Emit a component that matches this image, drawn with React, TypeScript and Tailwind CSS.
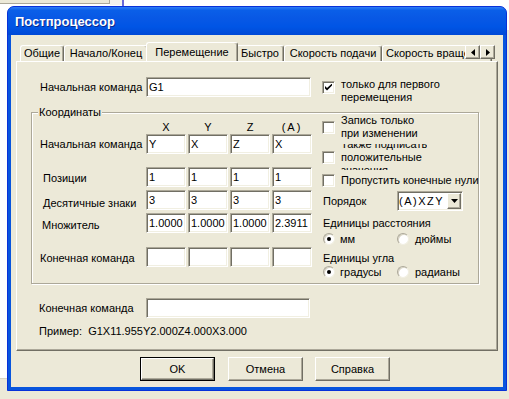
import React from "react";

const sunken =
  "bg-white border border-t-[#aca899] border-l-[#aca899] border-r-white border-b-white shadow-[inset_1px_1px_0_#716f64,inset_-1px_-1px_0_#f1efe2]";
const raised =
  "bg-[#ece9d8] border border-t-white border-l-white border-r-[#716f64] border-b-[#716f64] shadow-[inset_-1px_-1px_0_#aca899]";

function Field({ w, value }: { w: string; value?: string }) {
  return (
    <div className={`h-[20px] ${w} ${sunken} pl-[2px] flex items-center whitespace-nowrap overflow-hidden`}>
      {value}
    </div>
  );
}

function Check({ checked }: { checked?: boolean }) {
  return (
    <div className={`w-[13px] h-[13px] shrink-0 ${sunken} flex items-center justify-center`}>
      {checked && (
        <svg width="7" height="7" viewBox="0 0 7 7">
          <path d="M0 2 L0 4.5 L2 6.5 L7 1.5 L7 -0.5 L2 4 Z" fill="#000" />
        </svg>
      )}
    </div>
  );
}

function Radio({ checked }: { checked?: boolean }) {
  return (
    <div className="w-[12px] h-[12px] shrink-0 rounded-full bg-white border border-t-[#aca899] border-l-[#aca899] border-r-[#f1efe2] border-b-[#f1efe2] shadow-[inset_1px_1px_0_#d8d4c4] flex items-center justify-center">
      {checked && <div className="w-[4px] h-[4px] rounded-full bg-black" />}
    </div>
  );
}

function Tab({ w, label }: { w: string; label: string }) {
  return (
    <div
      className={`h-[16px] ${w} shrink-0 flex items-center justify-center whitespace-nowrap border-t border-l border-white border-r border-r-[#716f64] rounded-t-[3px] shadow-[inset_-1px_0_0_#aca899]`}
    >
      {label}
    </div>
  );
}

export default function App() {
  return (
    <div className="relative w-[509px] h-[399px] overflow-hidden bg-white font-['Liberation_Sans',Arial,sans-serif] text-[11px] leading-[13px] text-black">
      {/* desktop background pieces */}
      <div className="absolute left-0 top-0 w-[110px] h-[4px] bg-[#ece9d8] border-b border-r border-[#aca899]" />
      <div className="absolute left-[110px] top-0 w-[12px] h-[5px] bg-[#f4f3ee]" />
      <div className="absolute left-[122px] top-0 w-[2px] h-[6px] bg-[#6a6ad8]" />
      <div className="absolute left-0 top-[378px] w-[8px] h-[21px] bg-[#ece9d8] border-t border-[#d8d4c4]" />
      <div className="absolute left-0 top-[391px] w-[509px] h-[8px] bg-[#ece9d8]" />
      <div className="absolute left-[506px] top-[30px] w-[3px] h-[369px] bg-[#ece9d8]" />

      {/* window */}
      <div className="absolute left-[7px] top-[6px] w-[500px] h-[385px] flex flex-col rounded-t-[7px] border border-[#0831d9] bg-[#0855dd] overflow-hidden">
        <div className="h-[28px] shrink-0 flex items-center pl-[7px] pt-[1px] bg-[linear-gradient(to_bottom,#2f7cf6_0%,#0a5fe8_12%,#0858e5_40%,#0055e5_70%,#0049d6_100%)]">
          <span className="text-white font-bold text-[13px] leading-[16px] [text-shadow:1px_1px_0_#0a2a90]">
            Постпроцессор
          </span>
        </div>

        <div className="flex-1 mx-[3px] mb-[3px] bg-[#ece9d8] flex flex-col px-[5px] pt-[7px]">
          {/* tabs */}
          <div className="relative h-[19px] flex items-end pl-[4px] overflow-hidden shrink-0">
            <Tab w="w-[44px]" label="Общие" />
            <Tab w="w-[84px]" label="Начало/Конец" />
            <div className="relative z-10 -mx-[2px] -mb-[2px] h-[21px] w-[92px] shrink-0 bg-[#ece9d8] flex items-center justify-center pb-[2px] border-t border-l border-white border-r border-r-[#716f64] rounded-t-[3px] shadow-[inset_-1px_0_0_#aca899]">
              Перемещение
            </div>
            <Tab w="w-[48px]" label="Быстро" />
            <Tab w="w-[98px]" label="Скорость подачи" />
            <Tab w="w-[110px]" label="Скорость вращения" />
            <div className="absolute right-[3px] top-[3px] flex z-20">
              <div className={`w-[15px] h-[14px] ${raised} flex items-center justify-center`}>
                <svg width="4" height="7" viewBox="0 0 4 7">
                  <path d="M4 0 L0 3.5 L4 7 Z" fill="#000" />
                </svg>
              </div>
              <div className={`w-[15px] h-[14px] ${raised} flex items-center justify-center`}>
                <svg width="4" height="7" viewBox="0 0 4 7">
                  <path d="M0 0 L4 3.5 L0 7 Z" fill="#000" />
                </svg>
              </div>
            </div>
          </div>

          {/* panel */}
          <div className="h-[290px] shrink-0 flex flex-col border-t border-l border-white border-r border-b border-r-[#716f64] border-b-[#716f64] shadow-[inset_-1px_-1px_0_#aca899]">
            {/* row 1 */}
            <div className="flex items-start h-[20px] mt-[15px] ml-[23px]">
              <div className="w-[106px] h-[20px] flex items-center">Начальная команда</div>
              <Field w="w-[165px]" value="G1" />
              <div className="ml-[11px] mt-[4px]">
                <Check checked />
              </div>
              <div className="ml-[6px] leading-[13px] pt-[1px]">
                <div>только для первого</div>
                <div>перемещения</div>
              </div>
            </div>

            {/* group */}
            <div className="relative mt-[15px] ml-[14px] w-[448px] h-[172px] shrink-0 border border-[#aca899] shadow-[inset_1px_1px_0_#fff,1px_1px_0_#fff] flex">
              <div className="absolute left-[6px] top-[-7px] px-[1px] bg-[#ece9d8] leading-[13px]">Координаты</div>

              {/* left column */}
              <div className="w-[280px] pl-[8px] pt-[8px] flex flex-col">
                <div className="flex h-[13px]">
                  <div className="w-[106px]" />
                  <div className="flex gap-[2px]">
                    <div className="w-[40px] text-center">X</div>
                    <div className="w-[40px] text-center">Y</div>
                    <div className="w-[40px] text-center">Z</div>
                    <div className="w-[40px] text-center tracking-[2px]">(A)</div>
                  </div>
                </div>
                <div className="flex">
                  <div className="w-[106px] h-[20px] flex items-center">Начальная команда</div>
                  <div className="flex gap-[2px]">
                    <Field w="w-[40px]" value="Y" />
                    <Field w="w-[40px]" value="X" />
                    <Field w="w-[40px]" value="Z" />
                    <Field w="w-[40px]" value="X" />
                  </div>
                </div>
                <div className="flex mt-[13px]">
                  <div className="w-[106px] h-[20px] flex items-center pl-[3px] relative top-[1px]">Позиции</div>
                  <div className="flex gap-[2px]">
                    <Field w="w-[40px]" value="1" />
                    <Field w="w-[40px]" value="1" />
                    <Field w="w-[40px]" value="1" />
                    <Field w="w-[40px]" value="1" />
                  </div>
                </div>
                <div className="flex mt-[3px]">
                  <div className="w-[106px] h-[20px] flex items-center pl-[3px] relative top-[3px]">Десятичные знаки</div>
                  <div className="flex gap-[2px]">
                    <Field w="w-[40px]" value="3" />
                    <Field w="w-[40px]" value="3" />
                    <Field w="w-[40px]" value="3" />
                    <Field w="w-[40px]" value="3" />
                  </div>
                </div>
                <div className="flex mt-[3px]">
                  <div className="w-[106px] h-[20px] flex items-center pl-[2px] relative top-[2px]">Множитель</div>
                  <div className="flex gap-[2px]">
                    <Field w="w-[40px]" value="1.0000" />
                    <Field w="w-[40px]" value="1.0000" />
                    <Field w="w-[40px]" value="1.0000" />
                    <Field w="w-[40px]" value="2.3911" />
                  </div>
                </div>
                <div className="flex mt-[14px]">
                  <div className="w-[106px] h-[20px] flex items-center relative top-[1px]">Конечная команда</div>
                  <div className="flex gap-[2px]">
                    <Field w="w-[40px]" />
                    <Field w="w-[40px]" />
                    <Field w="w-[40px]" />
                    <Field w="w-[40px]" />
                  </div>
                </div>
              </div>

              {/* right column */}
              <div className="ml-[10px] flex flex-col">
                <div className="h-[28px] flex items-center">
                  <Check />
                  <div className="ml-[6px] leading-[13px]">
                    <div>Запись только</div>
                    <div>при изменении</div>
                  </div>
                </div>
                <div className="mt-[3px] h-[26px] flex items-center">
                  <Check />
                  <div className="ml-[6px] h-[26px] overflow-hidden flex items-center">
                    <div className="leading-[13px] shrink-0">
                      <div>Также подписать</div>
                      <div>положительные</div>
                      <div>значения</div>
                    </div>
                  </div>
                </div>
                <div className="h-[20px] flex items-center">
                  <Check />
                  <div className="ml-[6px] whitespace-nowrap">Пропустить конечные нули</div>
                </div>
                <div className="mt-[1px] h-[20px] flex items-center">
                  <div className="w-[75px] pl-[1px]">Порядок</div>
                  <div className={`w-[66px] h-[20px] ${sunken} flex items-center justify-between pl-[1px] pr-[1px]`}>
                    <span className="tracking-[1.5px]">(A)XZY</span>
                    <div className={`w-[14px] h-[16px] ${raised} flex items-center justify-center`}>
                      <svg width="7" height="4" viewBox="0 0 7 4">
                        <path d="M0 0 L7 0 L3.5 4 Z" fill="#000" />
                      </svg>
                    </div>
                  </div>
                </div>
                <div className="mt-[5px] h-[14px] flex items-center pl-[1px] whitespace-nowrap">Единицы расстояния</div>
                <div className="mt-[2px] h-[14px] flex items-center pl-[1px]">
                  <div className="w-[74px] flex items-center">
                    <Radio checked />
                    <span className="ml-[5px]">мм</span>
                  </div>
                  <Radio />
                  <span className="ml-[6px]">дюймы</span>
                </div>
                <div className="mt-[5px] h-[14px] flex items-center pl-[1px]">Единицы угла</div>
                <div className="h-[14px] flex items-center pl-[1px]">
                  <div className="w-[74px] flex items-center">
                    <Radio checked />
                    <span className="ml-[5px]">градусы</span>
                  </div>
                  <Radio />
                  <span className="ml-[6px]">радианы</span>
                </div>
              </div>
            </div>

            {/* end command */}
            <div className="flex mt-[14px] ml-[22px]">
              <div className="w-[107px] h-[20px] flex items-center">Конечная команда</div>
              <Field w="w-[164px]" />
            </div>
            <div className="mt-[6px] ml-[22px] h-[14px] leading-[14px] whitespace-pre">
              {"Пример:  G1X11.955Y2.000Z4.000X3.000"}
            </div>
          </div>

          {/* buttons */}
          <div className="mt-[6px] h-[24px] flex pl-[124px] shrink-0">
            <div className="w-[75px] h-[24px] border border-black">
              <div className={`w-full h-full ${raised} flex items-center justify-center`}>OK</div>
            </div>
            <div className={`ml-[13px] w-[75px] h-[24px] ${raised} flex items-center justify-center`}>Отмена</div>
            <div className={`ml-[12px] w-[75px] h-[24px] ${raised} flex items-center justify-center`}>Справка</div>
          </div>
        </div>
      </div>
    </div>
  );
}
